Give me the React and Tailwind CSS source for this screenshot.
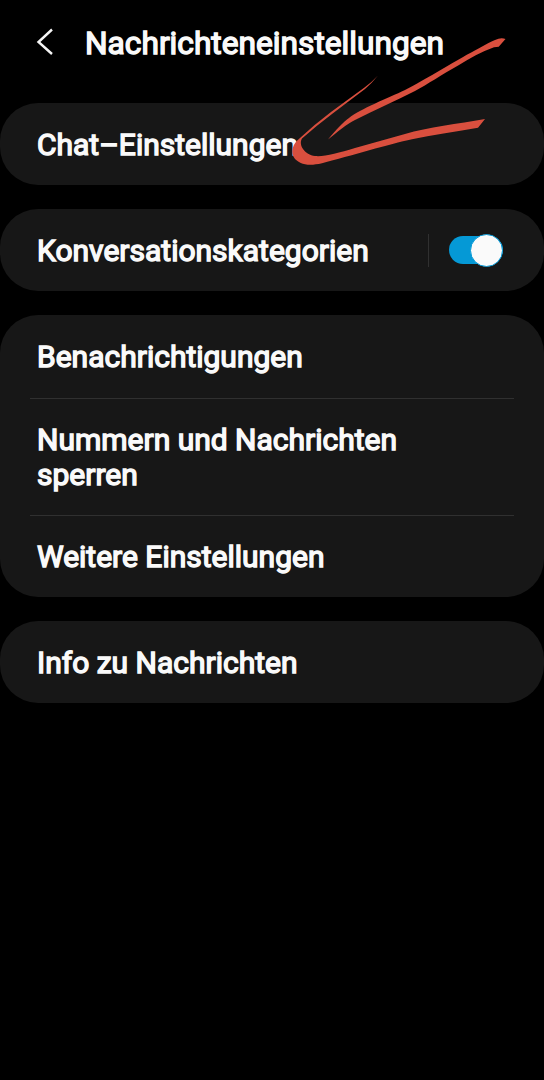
function Card({ children, className = "" }) {
  return <section className={`w-full overflow-hidden rounded-[38px] bg-[#171717] ${className}`}>{children}</section>;
}

function Text({ children }) {
  return <span className="whitespace-nowrap">{children}</span>;
}

export default function App() {
  return (
    <main className="relative flex h-[1080px] w-[544px] flex-col overflow-hidden bg-black font-['Roboto',sans-serif] text-[30px] leading-[35px] font-normal text-[#fafafa] [-webkit-text-stroke:1.4px_#fafafa]">
      <header className="flex h-[103px] items-start pt-[26px] pl-[36px]">
        <svg className="mt-[2px] h-[28px] w-[18px]" viewBox="0 0 18 28" fill="none" stroke="#f5f5f5" strokeWidth="2.4">
          <path d="M16 1.5L2.5 14L16 26" />
        </svg>
        <h1 className="ml-[31px] text-[31.7px]"><Text>Nachrichteneinstellungen</Text></h1>
      </header>
      <div className="flex flex-col gap-[24px]">
        <Card className="flex h-[82px] items-center px-[37px]"><Text>Chat–Einstellungen</Text></Card>
        <Card className="flex h-[82px] items-center pl-[37px] pr-[41px]">
          <Text>Konversationskategorien</Text>
          <div className="ml-auto h-[33px] w-px bg-[#303030]" />
          <div className="ml-[20px] flex h-[28px] w-[54px] items-center justify-end rounded-full bg-[#0599d6]">
            <div className="h-[33px] w-[33px] shrink-0 rounded-full border-[1.5px] border-[#0599d6] bg-[#fafafa]" />
          </div>
        </Card>
        <Card className="px-[30px]">
          <div className="flex h-[83px] items-center pl-[7px]"><Text>Benachrichtigungen</Text></div>
          <div className="flex h-[118px] items-center border-y border-[#303030] pl-[7px]">
            <p><Text>Nummern und Nachrichten</Text><br /><Text>sperren</Text></p>
          </div>
          <div className="flex h-[81px] items-center pl-[7px]"><Text>Weitere Einstellungen</Text></div>
        </Card>
        <Card className="flex h-[82px] items-center px-[37px]"><Text>Info zu Nachrichten</Text></Card>
      </div>
      <svg className="pointer-events-none absolute inset-0 h-full w-full" viewBox="0 0 544 1080" fill="#d94f3e">
        <path d="M378 75.5Q372 83 365 89Q349 101 332 114Q316 126 302 138.5C298 145 305 155 315 156C324 157 338 153 355 148Q380 141 405 134C428 127 458 124 485 119L478 127.7C454 132 432 135 412 139.3C390 144 350 156 322 163.3C306 167 299 163 295 159C290 153 292 144 300 138Q315 124 331 112Q348 99.5 364.5 87.5Q372 82 378 75.5Z" />
        <path d="M328 139.5C335 131 344 121 349 118C360 109 388 98 405 90C425 80 460 58 479 48.3Q490 42 495 40Q501 37 505.5 39L498.7 46.7L494 47.3C481 52 470 58 459 65C441 75 428 84 415 91C396 101 374 110 355 120C348 123 336 133 328 139.5Z" />
      </svg>
    </main>
  );
}
